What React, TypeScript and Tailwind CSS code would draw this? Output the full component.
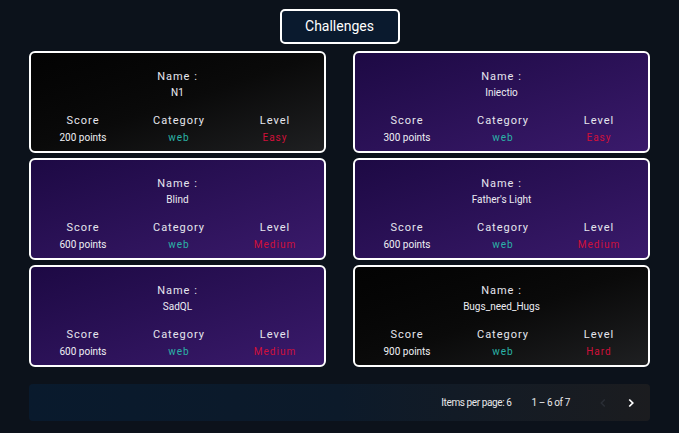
import React from 'react'

interface Challenge {
    name: string
    score: number
    category: string
    level: 'Easy' | 'Medium' | 'Hard'
    solved: boolean
}

const challenges: Challenge[] = [
    { name: 'N1', score: 200, category: 'web', level: 'Easy', solved: true },
    { name: 'Iniectio', score: 300, category: 'web', level: 'Easy', solved: false },
    { name: 'Blind', score: 600, category: 'web', level: 'Medium', solved: false },
    { name: "Father's Light", score: 600, category: 'web', level: 'Medium', solved: false },
    { name: 'SadQL', score: 600, category: 'web', level: 'Medium', solved: false },
    { name: 'Bugs_need_Hugs', score: 900, category: 'web', level: 'Hard', solved: true },
]

function ChallengeCard({ c }: { c: Challenge }) {
    const bg = c.solved
        ? 'bg-gradient-to-br from-[#030303] via-[#0a0a0a] to-[#1f2022]'
        : 'bg-gradient-to-br from-[#1d0944] to-[#3a1a6b]'
    return (
        <div className={`h-[102px] rounded-[6px] border-2 border-white ${bg} flex flex-col items-center pt-[17px]`}>
            <div className="text-[11px] leading-[14px] tracking-[1px] text-[#e6e6ee]">Name :</div>
            <div className="mt-[2px] text-[10px] leading-[13px] text-[#ececf2]">{c.name}</div>
            <div className="mt-[15px] grid w-full grid-cols-3 pl-[4px] pr-[1px] text-center">
                <div>
                    <div className="text-[11px] leading-[14px] tracking-[1px] text-[#e6e6ee]">Score</div>
                    <div className="mt-[3px] text-[10px] leading-[13px] text-[#f0f0f4]">{c.score} points</div>
                </div>
                <div>
                    <div className="text-[11px] leading-[14px] tracking-[1px] text-[#e6e6ee]">Category</div>
                    <div className="mt-[3px] text-[10px] leading-[13px] tracking-[1px] text-[#2bb3a8]">{c.category}</div>
                </div>
                <div>
                    <div className="text-[11px] leading-[14px] tracking-[1px] text-[#e6e6ee]">Level</div>
                    <div className="mt-[3px] text-[10px] leading-[13px] tracking-[1px] text-[#d0103a]">{c.level}</div>
                </div>
            </div>
        </div>
    )
}

export default function App() {
    return (
        <div
            className="min-h-[433px] w-full bg-[#0c121b] flex flex-col items-center pt-[9px]"
            style={{ fontFamily: 'Roboto, "Noto Sans", sans-serif' }}
        >
            <div className="w-[120px] h-[35px] rounded-[5px] border-2 border-white bg-[#0a1a2e] flex items-center justify-center text-[14px] text-white">
                Challenges
            </div>
            <div className="mt-[7px] grid w-[621px] grid-cols-2 gap-x-[27px] gap-y-[5px]">
                {challenges.map((c) => (
                    <ChallengeCard key={c.name} c={c} />
                ))}
            </div>
            <div className="mt-[17px] h-[37px] w-[621px] rounded-[4px] bg-gradient-to-r from-[#091a2d] via-[#0c1a2a] to-[#1b1c1f] flex items-center justify-end pr-[12px] text-[10px] tracking-[-0.4px] text-[#e8e8ea]">
                <span>Items per page: 6</span>
                <span className="ml-[20px]">1 – 6 of 7</span>
                <svg className="ml-[26px]" width="14" height="14" viewBox="0 0 24 24" fill="none" stroke="#2a2e36" strokeWidth="2.5">
                    <path d="M15 6l-6 6 6 6" />
                </svg>
                <svg className="ml-[14px]" width="14" height="14" viewBox="0 0 24 24" fill="none" stroke="#ffffff" strokeWidth="3">
                    <path d="M9 6l6 6-6 6" />
                </svg>
            </div>
        </div>
    )
}
